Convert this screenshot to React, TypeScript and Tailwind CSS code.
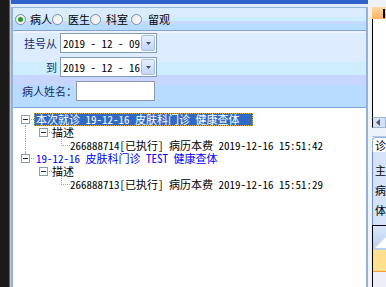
import React from "react";

const font = { fontFamily: '"Noto Sans Mono CJK SC", "Noto Sans CJK SC", monospace' };

function Radio({ checked, label, gap }: { checked?: boolean; label: string; gap: string }) {
  return (
    <div className="flex items-center">
      <span className="flex h-[11px] w-[11px] items-center justify-center rounded-full border border-[#7a8ea8] bg-[linear-gradient(135deg,#e8e8e0,#ffffff)]">
        {checked && <span className="h-[5px] w-[5px] rounded-full bg-[#21a121]" />}
      </span>
      <span className={`${gap} text-[11px] leading-none text-black`}>{label}</span>
    </div>
  );
}

function DateBox({ value }: { value: string }) {
  return (
    <div className="flex h-[20px] w-[97px] items-center justify-between border border-[#7f9db9] bg-white pl-[2px] pr-[1px]">
      <span className="whitespace-pre text-[11px] leading-none text-black">{value}</span>
      <span className="flex h-[16px] w-[14px] items-center justify-center rounded-[2px] border border-[#a3bde3] bg-[linear-gradient(to_bottom,#e6efff,#c3d6f5)]">
        <svg width="5" height="3" viewBox="0 0 5 3">
          <path d="M0 0h5L2.5 3z" fill="#3d4f7a" />
        </svg>
      </span>
    </div>
  );
}

function Expander() {
  return (
    <span className="relative z-10 flex h-[9px] w-[9px] items-center justify-center border border-[#8a9bb4] bg-white">
      <span className="h-px w-[5px] bg-[#1e2a44]" />
    </span>
  );
}

// one 18px gutter cell of the tree
function Cell({ kind }: { kind: "blank" | "vline" | "boxFirst" | "boxLast" | "boxChild" | "leaf" }) {
  return (
    <div className="relative flex h-[13px] w-[18px] shrink-0 items-center justify-center">
      {kind === "vline" && (
        <span className="absolute left-[9px] top-0 h-full border-l border-dotted border-[#a0a0a0]" />
      )}
      {kind === "boxFirst" && (
        <span className="absolute left-[9px] top-[6px] h-[7px] border-l border-dotted border-[#a0a0a0]" />
      )}
      {kind === "boxLast" && (
        <span className="absolute left-[9px] top-0 h-[6px] border-l border-dotted border-[#a0a0a0]" />
      )}
      {kind === "leaf" && (
        <>
          <span className="absolute left-[9px] top-0 h-[7px] border-l border-dotted border-[#a0a0a0]" />
          <span className="absolute left-[9px] top-[6px] w-[9px] border-t border-dotted border-[#a0a0a0]" />
        </>
      )}
      {kind !== "blank" && kind !== "vline" && kind !== "leaf" && (
        <>
          <span className="absolute left-[13px] top-[6px] w-[5px] border-t border-dotted border-[#a0a0a0]" />
          <Expander />
        </>
      )}
    </div>
  );
}

export default function App() {
  return (
    <div className="flex h-[287px] w-[386px] overflow-hidden bg-[#1a1a1a]" style={font}>
      {/* left dark edge */}
      <div className="w-[9px] shrink-0 bg-[#1a1a1a]" />
      <div className="w-px shrink-0 bg-[#6a5a5a]" />
      <div className="w-px shrink-0 bg-[#c8c8d0]" />

      {/* main panel */}
      <div className="flex w-[357px] shrink-0 flex-col bg-[#e2ecf8]">
        <div className="h-[4px] bg-[#3063cc]" />
        <div className="h-[3px] bg-[#e0ebf8]" />
        <div className="flex flex-1 flex-col border-x-2 border-t border-[#8fb2de]">
          {/* radio row */}
          <div className="flex h-[23px] items-center border-b border-[#7ea6d6] bg-[linear-gradient(to_bottom,#dcecff_0%,#dcecff_40%,#cceeff_40%,#cceeff_58%,#c8d8ff_58%,#c8d8ff_75%,#b8dcff_75%)] pl-[2px]">
            <Radio checked label="病人" gap="ml-[4px]" />
            <Radio label="医生" gap="ml-[5px]" />
            <Radio label="科室" gap="ml-[5px]" />
            <div className="ml-[3px]">
              <Radio label="留观" gap="ml-[6px]" />
            </div>
          </div>

          {/* filter form */}
          <div className="flex h-[77px] flex-col border-b border-[#7ea6d6] bg-[linear-gradient(to_bottom,#f0f0ff_0px,#f0f0ff_2px,#ddecff_2px,#ddecff_31px,#cdeeff_31px,#cdeeff_44px,#c8d6ff_44px,#c8d6ff_54px,#b8dcff_54px)] pt-[2px]">
            <div className="flex h-[20px] items-center">
              <span className="w-[44px] text-right text-[11px] leading-none text-[#1a2a6c]">挂号从</span>
              <span className="ml-[3px]" />
              <DateBox value="2019 - 12 - 09" />
            </div>
            <div className="mt-[4px] flex h-[20px] items-center">
              <span className="w-[44px] text-right text-[11px] leading-none text-[#1a2a6c]">到</span>
              <span className="ml-[3px]" />
              <DateBox value="2019 - 12 - 16" />
            </div>
            <div className="mt-[4px] flex h-[20px] items-center">
              <span className="ml-[9px] w-[54px] whitespace-nowrap text-[11px] leading-none text-[#1a2a6c]">病人姓名：</span>
              <div className="h-[20px] w-[79px] border border-[#8e98a8] bg-white" />
            </div>
          </div>

          {/* tree */}
          <div className="flex flex-1 flex-col bg-white pl-[3px] pt-[5px] text-[11px] leading-[11px] text-black">
            <div className="flex h-[13px] items-center">
              <Cell kind="boxFirst" />
              <span className="flex h-[13px] items-center whitespace-pre border border-dotted border-[#d8b040] bg-[#316ac5] px-px text-white">本次就诊 19-12-16 皮肤科门诊 健康查体  </span>
            </div>
            <div className="flex h-[13px] items-center">
              <Cell kind="vline" />
              <Cell kind="boxChild" />
              <span>描述</span>
            </div>
            <div className="flex h-[13px] items-center">
              <Cell kind="vline" />
              <Cell kind="blank" />
              <Cell kind="leaf" />
              <span className="whitespace-pre">266888714[已执行] 病历本费 2019-12-16 15:51:42</span>
            </div>
            <div className="flex h-[13px] items-center">
              <Cell kind="boxLast" />
              <span className="whitespace-pre pl-[2px] text-[#0000ff]">19-12-16 皮肤科门诊 TEST 健康查体</span>
            </div>
            <div className="flex h-[13px] items-center">
              <Cell kind="blank" />
              <Cell kind="boxChild" />
              <span>描述</span>
            </div>
            <div className="flex h-[13px] items-center">
              <Cell kind="blank" />
              <Cell kind="blank" />
              <Cell kind="leaf" />
              <span className="whitespace-pre">266888713[已执行] 病历本费 2019-12-16 15:51:29</span>
            </div>
          </div>
        </div>
      </div>

      {/* splitter */}
      <div className="w-[4px] shrink-0 bg-[#eef3f9]" />

      {/* right neighbour panel, cut off */}
      <div className="flex flex-1 flex-col bg-[#eef3f9] text-[11px] leading-none text-black">
        <div className="h-[7px] shrink-0" />
        <div className="flex h-[12px] shrink-0 items-center justify-end bg-[linear-gradient(to_bottom,#ffd9a0,#ffb25c)] pr-[1px]">
          <span className="h-[9px] w-[2px] bg-black" />
        </div>
        <div className="h-[98px] shrink-0 border-l border-black bg-white" />
        <div className="flex h-[11px] shrink-0 items-center border border-l-black border-[#9eb4d4] bg-[#d6e2f2] pl-[3px]">
          <svg width="4" height="7" viewBox="0 0 4 7">
            <path d="M4 0v7L0 3.5z" fill="#4a5a78" />
          </svg>
        </div>
        <div className="h-[9px] shrink-0 border-b border-[#b4c8e6] bg-[#eef3f9]" />
        <div className="flex h-[15px] shrink-0 items-center rounded-tl-[4px] border-l border-t border-[#8fb2de] bg-white pl-[2px]">
          诊
        </div>
        <div className="flex h-[73px] shrink-0 flex-col border-l border-[#6a8ed0] bg-[#d4e3f8] pl-[2px] pt-[13px]">
          <span className="h-[21px]">主</span>
          <span className="h-[21px]">病</span>
          <span className="h-[21px]">体</span>
        </div>
        <div className="flex flex-1 flex-col border-l border-t border-black">
          <div className="relative h-[24px] shrink-0 bg-[linear-gradient(to_bottom,#d8e6f8,#b8cff0)]">
            <svg className="absolute bottom-[2px] left-[2px]" width="12" height="12" viewBox="0 0 12 12">
              <path d="M12 0v12H0z" fill="#ffffff" />
            </svg>
          </div>
          <div className="h-[22px] shrink-0 border-b border-[#ff9a30] bg-[#ffe08e]" />
          <div className="flex-1 bg-[#eeeefa]" />
        </div>
      </div>
    </div>
  );
}
